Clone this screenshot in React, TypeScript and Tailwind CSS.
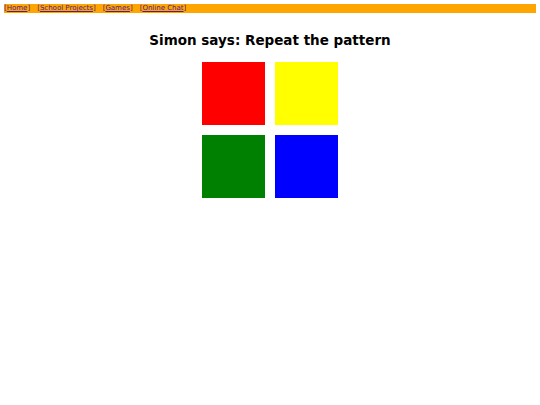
export default function App() {
  const links = ['Home', 'School Projects', 'Games', 'Online Chat'];
  const colors = ['bg-[#ff0000]', 'bg-[#ffff00]', 'bg-[#008000]', 'bg-[#0000ff]'];
  return (
    <div className="min-h-[405px] bg-white px-1 pt-1 font-['DejaVu_Sans',Verdana,sans-serif]">
      <div className="flex h-[9px] items-center gap-[7px] bg-[#ffa500] text-[7px] leading-none text-[#551a8b]">
        {links.map(l => (
          <span key={l}>[<a href="#" className="underline">{l}</a>]</span>
        ))}
      </div>
      <h1 className="mt-[18px] text-center text-[13.5px] font-bold leading-[18px] text-black">Simon says: Repeat the pattern</h1>
      <div className="mx-auto mt-[13px] grid w-[136px] grid-cols-2 gap-[10px]">
        {colors.map(c => (
          <div key={c} className={`h-[63px] w-[63px] ${c}`} />
        ))}
      </div>
    </div>
  );
}
